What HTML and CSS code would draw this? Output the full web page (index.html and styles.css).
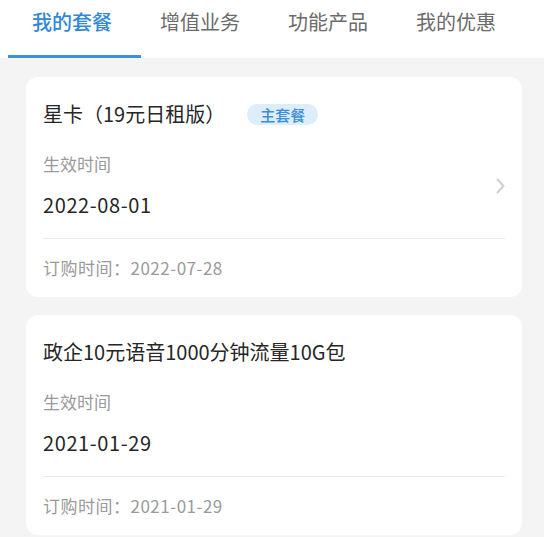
FILE: index.html
```html
<!DOCTYPE html>
<html lang="zh-CN">
<head>
    <meta charset="UTF-8">
    <title>我的套餐</title>
    <link rel="stylesheet" href="styles.css">
</head>
<body>
    <div class="tabs">
        <div class="tab active">我的套餐</div>
        <div class="tab">增值业务</div>
        <div class="tab">功能产品</div>
        <div class="tab">我的优惠</div>
    </div>

    <div class="list">
        <div class="card">
            <div class="card-title">
                <span class="name">星卡（19元日租版）</span>
                <span class="badge">主套餐</span>
            </div>
            <div class="card-body">
                <div class="info">
                    <div class="label">生效时间</div>
                    <div class="date">2022-08-01</div>
                </div>
                <svg class="arrow" width="9" height="16" viewBox="0 0 9 16">
                    <path d="M1.5 1.5 L7.5 8 L1.5 14.5" fill="none" stroke="#cfcfcf" stroke-width="2" stroke-linecap="round" stroke-linejoin="round"/>
                </svg>
            </div>
            <div class="line"></div>
            <div class="order">订购时间：2022-07-28</div>
        </div>

        <div class="card">
            <div class="card-title">
                <span class="name">政企10元语音1000分钟流量10G包</span>
            </div>
            <div class="card-body">
                <div class="info">
                    <div class="label">生效时间</div>
                    <div class="date">2021-01-29</div>
                </div>
            </div>
            <div class="line"></div>
            <div class="order">订购时间：2021-01-29</div>
        </div>
    </div>
</body>
</html>
```

FILE: styles.css
```css
*{
    margin: 0;
    padding: 0;
    box-sizing: border-box;
}

body{
    background-color: #f4f4f4;
    font-family: "Noto Sans CJK SC", "Noto Sans", sans-serif;
    color: #222;
}

.tabs{
    display: flex;
    height: 58px;
    padding-left: 8px;
    background-color: #fff;
}

.tab{
    width: 128px;
    height: 58px;
    line-height: 44px;
    text-align: center;
    font-size: 20px;
    color: #6b6b6b;
    border-bottom: 3px solid transparent;
}

/* 下划线比文字区域稍宽一点 */
.tab.active{
    width: 133px;
    padding-right: 5px;
    margin-right: -5px;
    color: #2f88d8;
    font-weight: 500;
    border-bottom-color: #3a90dc;
}

.list{
    display: flex;
    flex-direction: column;
    gap: 18px;
    padding: 19px 22px 0 26px;
}

.card{
    background-color: #fff;
    border-radius: 12px;
    padding: 24px 17px 17px;
}

.card-title{
    display: flex;
    align-items: center;
    height: 26px;
}

.name{
    font-size: 20px;
    line-height: 26px;
    color: #262626;
}

.badge{
    margin-left: 22px;
    height: 21px;
    line-height: 21px;
    padding: 0 13px;
    border-radius: 11px;
    background-color: #ddedfa;
    color: #3b8dd6;
    font-size: 15px;
    font-weight: 500;
}

.card-body{
    display: flex;
    align-items: center;
    justify-content: space-between;
}

.info{
    margin-top: 25px;
}

.label{
    font-size: 17px;
    line-height: 24px;
    color: #9a9a9a;
}

.date{
    margin-top: 15px;
    font-size: 20px;
    line-height: 28px;
    letter-spacing: 0.6px;
    color: #262626;
}

.arrow{
    margin-top: 25px;
}

.line{
    height: 1px;
    margin-top: 19px;
    background-color: #ececec;
}

.order{
    margin-top: 17px;
    font-size: 17px;
    line-height: 24px;
    letter-spacing: 0.5px;
    color: #9a9a9a;
}
```
